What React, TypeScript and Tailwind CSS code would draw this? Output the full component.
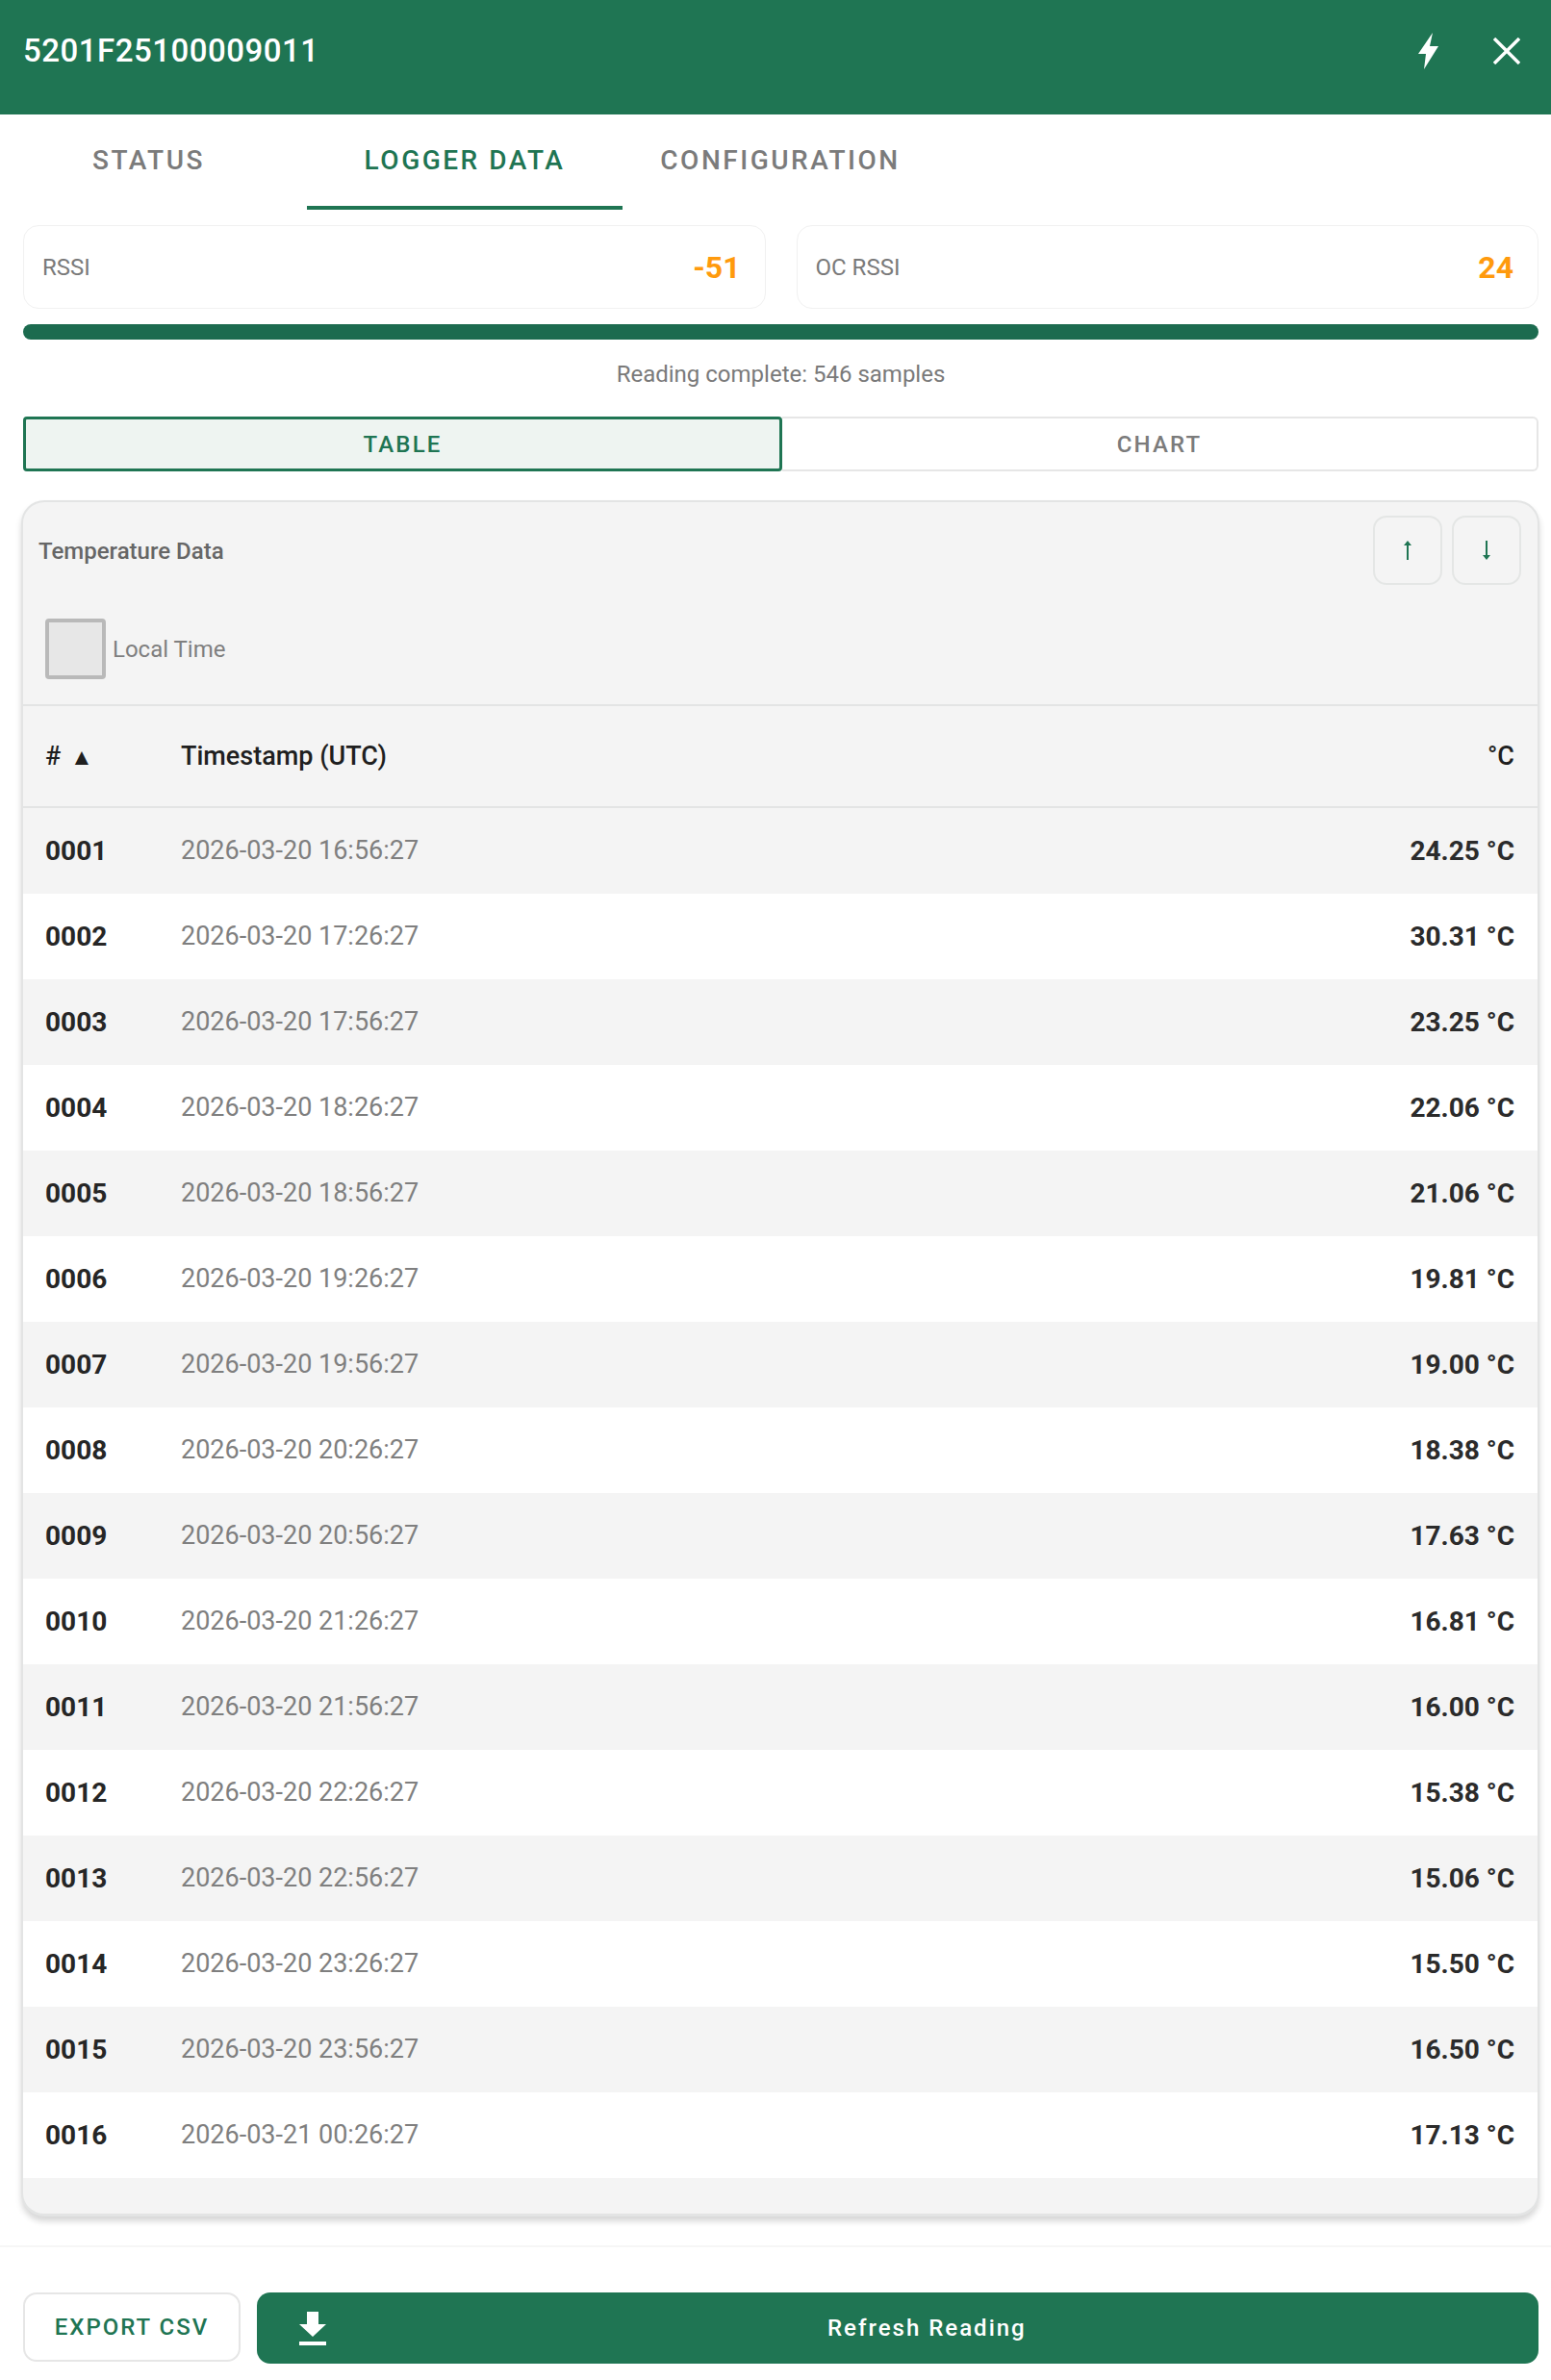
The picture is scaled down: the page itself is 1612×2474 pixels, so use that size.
// App.tsx
const ROWS: [string, string, string][] = [
  ["0001", "2026-03-20 16:56:27", "24.25 °C"],
  ["0002", "2026-03-20 17:26:27", "30.31 °C"],
  ["0003", "2026-03-20 17:56:27", "23.25 °C"],
  ["0004", "2026-03-20 18:26:27", "22.06 °C"],
  ["0005", "2026-03-20 18:56:27", "21.06 °C"],
  ["0006", "2026-03-20 19:26:27", "19.81 °C"],
  ["0007", "2026-03-20 19:56:27", "19.00 °C"],
  ["0008", "2026-03-20 20:26:27", "18.38 °C"],
  ["0009", "2026-03-20 20:56:27", "17.63 °C"],
  ["0010", "2026-03-20 21:26:27", "16.81 °C"],
  ["0011", "2026-03-20 21:56:27", "16.00 °C"],
  ["0012", "2026-03-20 22:26:27", "15.38 °C"],
  ["0013", "2026-03-20 22:56:27", "15.06 °C"],
  ["0014", "2026-03-20 23:26:27", "15.50 °C"],
  ["0015", "2026-03-20 23:56:27", "16.50 °C"],
  ["0016", "2026-03-21 00:26:27", "17.13 °C"],
]

function StatCard({ label, value }: { label: string; value: string }) {
  return (
    <div className="flex h-[87px] w-[772px] items-center justify-between rounded-[16px] border border-[#f1f1f1] pl-[19px] pr-[25px]">
      <span className="text-[24px] text-[#7a7a7a]">{label}</span>
      <span className="text-[32px] font-bold text-[#ff9a0d]">{value}</span>
    </div>
  )
}

function SortButton({ down }: { down?: boolean }) {
  return (
    <button className="flex h-[72px] w-[72px] items-center justify-center rounded-[14px] border-2 border-[#e4e6e5]">
      <svg width="8" height="20" viewBox="0 0 8 20" className="text-[#1f7553]" fill="currentColor">
        {down ? <path d="M3 0h2v15h3l-4 5-4-5h3z" /> : <path d="M4 0l4 5H5v15H3V5H0z" />}
      </svg>
    </button>
  )
}

export default function App() {
  return (
    <div className="min-h-[2474px] w-[1612px] bg-white font-['Roboto',sans-serif]">
      {/* Header */}
      <div className="flex h-[119px] items-center justify-between bg-[#1f7553] pb-[14px] pl-[24px] pr-[32px]">
        <span className="text-[33px] font-medium tracking-[0.5px] text-white">5201F25100009011</span>
        <div className="flex items-center gap-[57px]">
          <svg width="21" height="38" viewBox="0 0 21 38" fill="white">
            <path d="M15 0 0 22h8L6 38 21 14h-9z" />
          </svg>
          <svg width="28" height="28" viewBox="0 0 28 28" stroke="white" strokeWidth="3.4" fill="none">
            <path d="M1 1l26 26M27 1 1 27" />
          </svg>
        </div>
      </div>

      {/* Tabs */}
      <div className="flex h-[99px] text-[28px] font-medium tracking-[2.5px] text-[#7b7b7b]">
        <div className="mr-[10px] flex h-[99px] w-[309px] items-center justify-center pb-[4px]">STATUS</div>
        <div className="flex h-[99px] w-[328px] items-center justify-center border-b-[4px] border-[#1f7553] text-[#1f7553]">
          LOGGER DATA
        </div>
        <div className="flex h-[99px] w-[328px] items-center justify-center pb-[4px]">CONFIGURATION</div>
      </div>

      <div className="px-[24px] pr-[13px]">
        {/* RSSI cards */}
        <div className="mt-[16px] flex gap-[32px]">
          <StatCard label="RSSI" value="-51" />
          <StatCard label="OC RSSI" value="24" />
        </div>

        {/* Progress */}
        <div className="mt-[16px] h-[16px] w-[1575px] rounded-full bg-[#1c6b4f]" />
        <div className="mt-[20px] w-[1575px] text-center text-[24px] leading-[32px] text-[#7a7a7a]">
          Reading complete: 546 samples
        </div>

        {/* Table / chart switch */}
        <div className="mt-[28px] flex h-[57px] w-[1575px] text-[24px] font-medium tracking-[2.2px]">
          <div className="flex w-[789px] items-center justify-center rounded-[4px] border-[3px] border-[#1f7553] bg-[#eef4f1] text-[#1f7553]">
            TABLE
          </div>
          <div className="flex flex-1 items-center justify-center rounded-r-[6px] border-2 border-l-0 border-[#e6e6e6] text-[#7b7b7b]">
            CHART
          </div>
        </div>

        {/* Data card */}
        <div className="-ml-[2px] mt-[30px] h-[783px] h-auto w-[1578px] overflow-hidden rounded-[24px] border-2 border-b-[3px] border-[#e3e4e4] bg-[#f4f4f4] shadow-[0_5px_6px_rgba(0,0,0,0.16)]">
          <div className="flex items-start justify-between pl-[16px] pr-[17px] pt-[14px]">
            <span className="mt-[23px] text-[24px] font-medium leading-[28px] text-[#666666]">Temperature Data</span>
            <div className="flex gap-[10px]">
              <SortButton />
              <SortButton down />
            </div>
          </div>
          <div className="mt-[35px] flex h-[63px] items-center pl-[23px]">
            <div className="h-[63px] w-[63px] rounded-[4px] border-[4px] border-[#b9b9b9] bg-[#e7e7e7]" />
            <span className="ml-[7px] text-[24px] text-[#7f7f7f]">Local Time</span>
          </div>

          <div className="mt-[26px] flex h-[108px] items-center justify-between border-y-2 border-[#e3e4e4] pl-[23px] pr-[24px] text-[27px] font-medium text-[#1f1f1f]">
            <div className="flex items-center">
              <span className="w-[141px]">
                # <span className="ml-[3px] text-[24px]">▲</span>
              </span>
              <span>Timestamp (UTC)</span>
            </div>
            <span>°C</span>
          </div>

          {ROWS.map(([id, time, temp], i) => (
            <div
              key={id}
              className={`flex h-[89px] items-center justify-between pl-[23px] pr-[24px] ${i % 2 === 0 ? "bg-[#f4f4f4]" : "bg-white"}`}
            >
              <div className="flex items-center">
                <span className="w-[141px] text-[28px] font-bold text-[#262626]">{id}</span>
                <span className="text-[27px] text-[#7f7f7f]">{time}</span>
              </div>
              <span className="text-[28px] font-bold text-[#2b2b2b]">{temp}</span>
            </div>
          ))}
          <div className="h-[37px]" />
        </div>
      </div>

      {/* Footer */}
      <div className="mt-[30px] flex gap-[17px] border-t-2 border-[#f6f6f6] pl-[24px] pr-[13px] pt-[47px]">
        <button className="flex h-[72px] w-[226px] items-center justify-center rounded-[14px] border-2 border-[#e6e6e6] text-[24px] font-medium tracking-[2px] text-[#1f7553]">
          EXPORT CSV
        </button>
        <button className="flex h-[74px] w-[1332px] items-center rounded-[14px] bg-[#1f7553] pl-[44px] text-[24px] font-medium tracking-[2px] text-white">
          <svg width="28" height="35" viewBox="0 0 28 35" fill="white">
            <path d="M8 0h12v13h8L14 26 0 13h8zM0 31h28v4H0z" />
          </svg>
          <span className="ml-[521px]">Refresh Reading</span>
        </button>
      </div>
    </div>
  )
}
